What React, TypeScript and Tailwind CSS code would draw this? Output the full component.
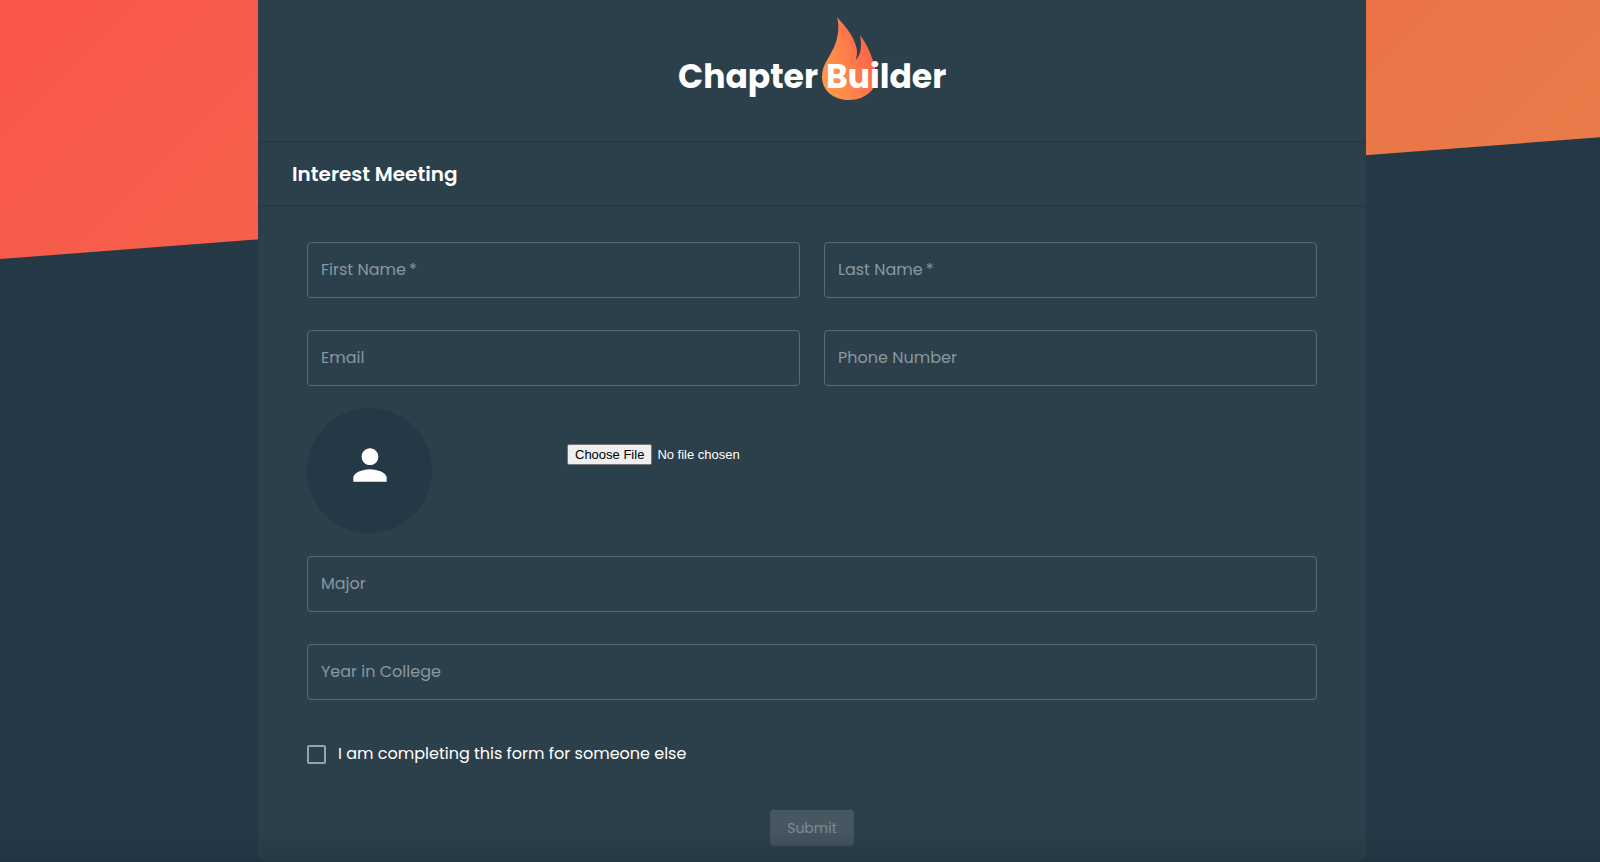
import React, { useState } from 'react';

interface FieldProps {
  id: string;
  label: string;
  type?: string;
  required?: boolean;
}

const Field: React.FC<FieldProps> = ({ id, label, type = 'text', required }) => (
  <div className="relative">
    <input
      id={id}
      name={id}
      type={type}
      required={required}
      placeholder=" "
      className="peer block w-full h-14 px-3.5 rounded-sm border border-[#596b75] bg-transparent text-base text-white outline-none hover:border-white focus:border-[#ff7a4a]"
    />
    {/* Resting label, moves onto the border once the field is in use */}
    <label
      htmlFor={id}
      className="absolute left-3.5 top-4 text-base leading-6 text-[#8a979f] pointer-events-none transition-all peer-focus:-top-2 peer-focus:bg-[#2c404b] peer-focus:text-xs peer-[:not(:placeholder-shown)]:-top-2 peer-[:not(:placeholder-shown)]:bg-[#2c404b] peer-[:not(:placeholder-shown)]:text-xs"
    >
      {label}
      {required && <span aria-hidden="true">&thinsp;*</span>}
    </label>
  </div>
);

const Logo: React.FC = () => (
  <svg
    width="280"
    height="92"
    viewBox="0 0 280 92"
    role="img"
    aria-label="Chapter Builder"
    className="font-['Poppins','Inter',sans-serif]"
  >
    <defs>
      <linearGradient id="flame" x1="0" y1="0.8" x2="0.9" y2="0.3">
        <stop offset="0" stopColor="#ff9a4b" />
        <stop offset="0.5" stopColor="#ff8149" />
        <stop offset="1" stopColor="#ff5f4b" />
      </linearGradient>
    </defs>
    <path
      d="M165 5C173 14 181 23 184 34C186 40 184.500 44 184 48C190 41 189.500 32 188 23C193 30 199 40 201.500 51C205 62 206 69 200 78C195 84 187 88 177 88C161 88 150 78 150 65C150 51 159 45 164 30C167 20 167 12 165 5Z"
      fill="url(#flame)"
    />
    <text x="6" y="76" fontSize="33" fontWeight="700" fill="#fff">
      Chapter
    </text>
    <text x="154" y="76" fontSize="33" fontWeight="700" fill="#fff">
      Builder
    </text>
  </svg>
);

export default function App() {
  const [forSomeoneElse, setForSomeoneElse] = useState(false);

  return (
    <div className="relative min-h-screen overflow-hidden bg-[#253845] font-['Poppins','Inter',sans-serif] text-white">
      {/* Slanted banner behind the card */}
      <div
        aria-hidden="true"
        className="absolute inset-x-0 top-0 h-[259px] bg-[linear-gradient(135deg,#fa564b,#e67e48)] [clip-path:polygon(0_0,100%_0,100%_53%,0_100%)]"
      />

      <div className="relative grid min-h-screen grid-cols-[258fr_1108fr_234fr]">
        <main className="col-start-2 rounded-b-lg bg-[#2c404b]">
          <header className="flex h-[143px] justify-center border-b-2 border-[#283a46] pt-3">
            <Logo />
          </header>
          <div className="flex h-16 items-center border-b-2 border-[#283a46] px-[34px]">
            <h1 className="text-xl font-semibold">Interest Meeting</h1>
          </div>

          <form className="px-[49px] pt-[35px] pb-4" onSubmit={(e) => e.preventDefault()}>
            <div className="grid grid-cols-2 gap-x-6 gap-y-8">
              <Field id="firstName" label="First Name" required />
              <Field id="lastName" label="Last Name" required />
              <Field id="email" label="Email" type="email" />
              <Field id="phone" label="Phone Number" type="tel" />
            </div>

            <div className="mt-[22px] mb-[23px] grid grid-cols-[260px_1fr]">
              <div className="flex size-[125px] items-center justify-center rounded-full bg-[#253845] pb-3">
                <svg viewBox="0 0 24 24" fill="currentColor" className="size-[50px]" aria-hidden="true">
                  <path d="M12 12c2.21 0 4-1.79 4-4s-1.79-4-4-4-4 1.79-4 4 1.79 4 4 4zm0 2c-2.67 0-8 1.34-8 4v2h16v-2c0-2.66-5.33-4-8-4z" />
                </svg>
              </div>
              <input
                type="file"
                accept="image/*"
                aria-label="Photo"
                className="mt-9 h-[22px] self-start font-['Liberation_Sans',sans-serif] text-[13px] leading-4 file:mr-[5px] file:h-[21px] file:rounded-xs file:border file:border-solid file:border-[#767676] file:bg-[#efefef] file:px-[7px] file:text-black"
              />
            </div>

            <div className="grid gap-8">
              <Field id="major" label="Major" />
              <Field id="year" label="Year in College" />
            </div>

            <div className="mt-[42px] flex items-center gap-3">
              <input
                id="someoneElse"
                type="checkbox"
                checked={forSomeoneElse}
                onChange={(e) => setForSomeoneElse(e.target.checked)}
                className="size-[19px] appearance-none rounded-xs border-2 border-[#98a3a9] checked:bg-[#ff7a4a]"
              />
              <label htmlFor="someoneElse" className="text-base leading-6">
                I am completing this form for someone else
              </label>
            </div>

            <div className="mt-11 flex justify-center">
              <button
                type="submit"
                disabled
                className="h-9 rounded-sm bg-[#465761] px-[17px] text-sm text-[#7d8b92]"
              >
                Submit
              </button>
            </div>
          </form>
        </main>
      </div>

      <div
        aria-hidden="true"
        className="pointer-events-none absolute inset-x-0 bottom-0 h-8 border-b border-[#222f40] bg-linear-to-b from-transparent to-[#20303c]/50"
      />
    </div>
  );
}
